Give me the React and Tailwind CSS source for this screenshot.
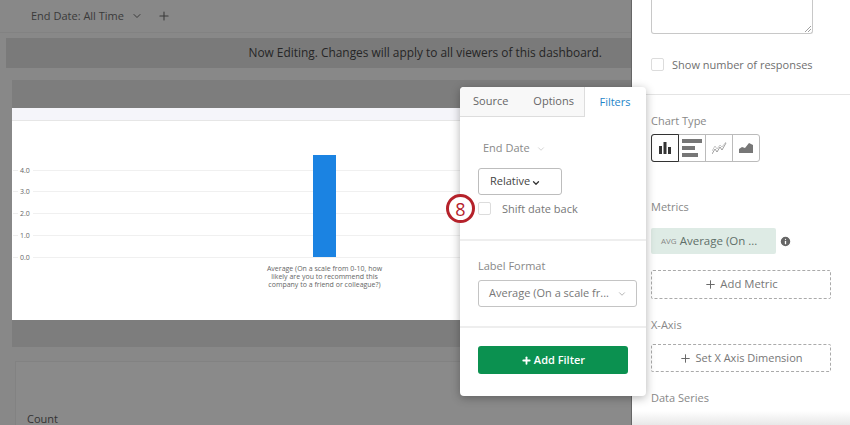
import React from "react";
import { ChevronDown, Plus, Info } from "lucide-react";

const font = { fontFamily: '"Open Sans", sans-serif' };

function Chart() {
  const rows = [
    ["4.0", 49],
    ["3.0", 70],
    ["2.0", 92],
    ["1.0", 114],
    ["0.0", 136],
  ];
  return (
    <svg width="620" height="199" className="block" style={font}>
      {rows.map(([t, y]) => (
        <g key={t}>
          <line x1="1" x2="6" y1={y + 0.5} y2={y + 0.5} stroke="#eeeeee" />
          <line x1="21" x2="620" y1={y + 0.5} y2={y + 0.5} stroke="#f0f0f0" />
          <text x="8" y={y + 3} fontSize="7" fill="#666">{t}</text>
        </g>
      ))}
      <rect x="301" y="34" width="23" height="102" fill="#1b83e2" />
      <g fontSize="7" fill="#666" textAnchor="middle">
        <text x="312.5" y="149.5">Average (On a scale from 0-10, how</text>
        <text x="312.5" y="157.5">likely are you to recommend this</text>
        <text x="312.5" y="165.5">company to a friend or colleague?)</text>
      </g>
    </svg>
  );
}

function Popover() {
  return (
    <div className="absolute left-[460px] top-[87px] w-[186px] h-[309px] bg-white rounded-[4px] shadow-[0_2px_10px_rgba(0,0,0,0.3)] z-10 flex flex-col">
      <div className="h-[30px] flex text-[11px] text-[#666]">
        <div className="w-[125px] h-[30px] bg-[#f8f8f8] border-r border-b border-[#dddddd] rounded-tl-[4px] flex items-center pl-[13px] gap-[25px]">
          <span>Source</span>
          <span>Options</span>
        </div>
        <div className="flex-1 flex items-center justify-center text-[#1f86c9] pr-[1px]">Filters</div>
      </div>
      <div className="h-[124px] border-b-2 border-[#eeeeee] px-[18px] relative">
        <div className="flex items-center mt-[22px] ml-[5px] h-[18px] text-[11px] text-[#8a8a8a]">
          End Date
          <ChevronDown size={10} strokeWidth={1.2} className="ml-[6px] mt-[2px] text-[#aaa]" />
        </div>
        <div className="mt-[11px] w-[84px] h-[27px] border border-[#bdbdbd] rounded-[3px] flex items-center pl-[11px] text-[11px] text-[#444]">
          Relative
          <ChevronDown size={10} strokeWidth={3} className="ml-[1px] mt-[2px] text-[#333]" />
        </div>
        <div className="flex items-center mt-[7px]">
          <div className="w-[13px] h-[13px] shrink-0 border border-[#dcdcdc] rounded-[2px]" />
          <span className="ml-[11px] text-[11px] leading-[13px] text-[#777]">Shift date back</span>
        </div>
      </div>
      <div className="h-[87px] border-b-2 border-[#eeeeee] px-[18px]">
        <div className="mt-[17px] text-[11px] leading-[16px] text-[#888]">Label Format</div>
        <div className="mt-[6px] w-[159px] h-[27px] border border-[#c4c4c4] rounded-[3px] flex items-center justify-between pl-[10px] pr-[9px] text-[11px] text-[#777] whitespace-nowrap">
          <span>Average (On a scale fr...</span>
          <ChevronDown size={10} strokeWidth={1.5} className="text-[#888]" />
        </div>
      </div>
      <div className="px-[18px] pt-[18px]">
        <div className="w-[150px] h-[28px] rounded-[3px] bg-[#0b9150] text-white flex items-center justify-center text-[11px] font-semibold">
          <Plus size={11} strokeWidth={4} className="mr-[2px]" />
          Add Filter
        </div>
      </div>
    </div>
  );
}

function BarsIcon() {
  return (
    <svg width="14" height="14" viewBox="0 0 14 14" fill="#333">
      <rect x="1" y="5" width="3" height="8" />
      <rect x="5.5" y="1" width="3" height="12" />
      <rect x="10" y="6" width="3" height="7" />
    </svg>
  );
}
function HBarsIcon() {
  return (
    <svg width="20" height="18" viewBox="0 0 20 18" fill="#777">
      <rect x="0" y="0" width="20" height="4" />
      <rect x="0" y="7" width="13" height="4" />
      <rect x="0" y="14" width="16" height="4" />
    </svg>
  );
}
function LineIcon() {
  return (
    <svg width="15" height="13" viewBox="0 0 15 13" fill="none" stroke="#888" strokeWidth="0.8">
      <path d="M0 12 L3 7 L5 10 L8 5 L10 8 L14 1" />
      <path d="M0 9 L3 4 L5 7 L8 3 L10 5 L14 0" stroke="#bbb" />
    </svg>
  );
}
function AreaIcon() {
  return (
    <svg width="14" height="10" viewBox="0 0 14 10" fill="#777">
      <path d="M0 10 V6 L3 4 L6 5 L10 0 L14 2 V10 Z" />
    </svg>
  );
}

function Sidebar() {
  return (
    <aside className="w-[218px] h-[425px] bg-white overflow-hidden relative shrink-0">
      <div className="pl-[19px] pr-[37px]">
        <div className="h-[34px] border border-t-0 border-[#c8c8c8] rounded-b-[3px] relative">
          <svg width="7" height="7" viewBox="0 0 7 7" className="absolute right-[1px] bottom-[1px]" stroke="#888" strokeWidth="0.8">
            <path d="M1 7 L7 1 M4 7 L7 4" />
          </svg>
        </div>
        <div className="flex items-center mt-[24px]">
          <div className="w-[13px] h-[13px] shrink-0 border border-[#dcdcdc] rounded-[2px]" />
          <span className="ml-[8px] text-[11px] leading-[13px] text-[#6f6f6f] whitespace-nowrap">Show number of responses</span>
        </div>
      </div>
      <div className="mt-[23px] h-px bg-[#e4e4e4]" />
      <div className="pl-[19px] pr-[19px]">
        <div className="mt-[18px] h-[16px] leading-[16px] text-[11px] text-[#888]">Chart Type</div>
        <div className="mt-[5px] w-[109px] h-[28px] flex border border-[#bbbbbb] rounded-[3px] relative">
          <div className="w-[28px] -ml-px -mt-px h-[28px] border border-[#333] rounded-l-[3px] flex items-center justify-center"><BarsIcon /></div>
          <div className="w-[27px] border-r border-[#bbb] flex items-center justify-center"><HBarsIcon /></div>
          <div className="w-[27px] border-r border-[#bbb] flex items-center justify-center"><LineIcon /></div>
          <div className="w-[26px] flex items-center justify-center"><AreaIcon /></div>
        </div>
        <div className="mt-[37px] h-[16px] leading-[16px] text-[11px] text-[#888]">Metrics</div>
        <div className="mt-[13px] flex items-center">
          <div className="w-[125px] h-[26px] bg-[#deebe5] rounded-[2px] flex items-center pl-[10px] whitespace-nowrap">
            <span className="text-[8px] text-[#888] mr-[3px]">AVG</span>
            <span className="text-[11.5px] text-[#5f6f69]">Average (On ...</span>
          </div>
          <Info size={13} strokeWidth={2.4} className="ml-[3px] text-white fill-[#666]" />
        </div>
        <div className="mt-[16px] w-[180px] h-[29px] border border-dashed border-[#aaaaaa] rounded-[2px] flex items-center justify-center text-[11.3px] text-[#777]">
          <Plus size={13} strokeWidth={1.8} className="mr-[3px] text-[#666]" /> Add Metric
        </div>
        <div className="mt-[18px] h-[16px] leading-[16px] text-[11px] text-[#888]">X-Axis</div>
        <div className="mt-[11px] w-[180px] h-[28px] border border-dashed border-[#aaaaaa] rounded-[2px] flex items-center justify-center text-[11px] text-[#777]">
          <Plus size={13} strokeWidth={1.8} className="mr-[3px] text-[#666]" /> Set X Axis Dimension
        </div>
        <div className="mt-[18px] h-[16px] leading-[16px] text-[11px] text-[#888]">Data Series</div>
      </div>
      <div className="absolute left-0 right-0 bottom-0 h-[14px] bg-gradient-to-b from-white to-[#e8e8e8]" />
    </aside>
  );
}

export default function App() {
  return (
    <div className="relative w-[850px] h-[425px] overflow-hidden flex bg-[#888888]" style={font}>
      <main className="flex-1 min-w-0 h-[425px] overflow-hidden border-r border-[#666]">
        <div className="h-[33px] border-b border-[#828282] flex items-center pl-[31px] text-[11px] text-[#3a3a3a]">
          End Date: All Time
          <ChevronDown size={12} strokeWidth={2} className="ml-[7px]" />
          <Plus size={14} strokeWidth={1.8} className="ml-[14px]" />
        </div>
        <div className="ml-[6px] mt-[5px] h-[30px] bg-[#7a7a7a] flex items-center justify-end pr-[29px] text-[11.9px] text-[#262626] whitespace-nowrap">
          Now Editing. Changes will apply to all viewers of this dashboard.
        </div>
        <div className="ml-[12px] mt-[12px] h-[267px] bg-[#7d7d7d] pt-[28px]">
          <div className="h-[212px] bg-white">
            <div className="h-[13px] bg-[#f5f5fa] border-b border-[#e6e6e6]" />
            <Chart />
          </div>
        </div>
        <div className="ml-[15px] mt-[14px] h-[80px] bg-[#8a8a8a] border-l border-t border-[#828282] pl-[11px] pt-[49px] text-[11px] leading-[16px] text-[#333]">
          Count
        </div>
      </main>
      <Sidebar />
      <Popover />
      <div className="absolute left-[446px] top-[194px] z-20 w-[29px] h-[29px] rounded-full border-[3px] border-[#b5222b] bg-white flex items-center justify-center text-[18px] leading-none text-[#b5222b]">
        8
      </div>
    </div>
  );
}
